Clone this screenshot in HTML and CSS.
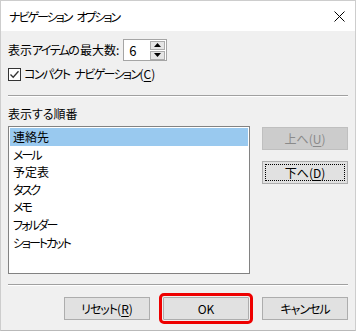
FILE: index.html
```html
<!DOCTYPE html>
<html lang="ja">
<head>
<meta charset="utf-8">
<link rel="stylesheet" href="styles.css">
</head>
<body>
<div class="window">
  <div class="titlebar">
    <span class="title">ナビゲーション<span class="sp"> </span>オプション</span>
    <svg class="close" width="11" height="11" viewBox="0 0 11 11"><path d="M0.5 0.5 L10.5 10.5 M10.5 0.5 L0.5 10.5" stroke="#000" stroke-width="1" fill="none"/></svg>
  </div>
  <div class="body">
    <div class="row-max">
      <span class="label label-max">表示<span class="k">アイテム</span>の最大数:</span>
      <div class="spin">
        <span class="spin-value">6</span>
        <div class="spin-btns">
          <div class="spin-btn"><svg width="7" height="4" viewBox="0 0 7 4"><path d="M3.5 0 L7 4 L0 4 Z" fill="#000"/></svg></div>
          <div class="spin-btn"><svg width="7" height="4" viewBox="0 0 7 4"><path d="M0 0 L7 0 L3.5 4 Z" fill="#000"/></svg></div>
        </div>
      </div>
    </div>
    <div class="row-check">
      <span class="checkbox"><svg width="11" height="11" viewBox="0 0 11 11"><path d="M1.5 5.5 L4.2 8.3 L9.5 2.2" stroke="#333" stroke-width="1.3" fill="none"/></svg></span>
      <span class="label"><span class="k2">コンパクト<span class="sp"> </span>ナビゲーション</span>(<u>C</u>)</span>
    </div>
    <div class="sep sep-top"></div>
    <div class="section-label">表示する順番</div>
    <div class="order">
      <ul class="list">
        <li class="selected">連絡先</li>
        <li class="kana">メール</li>
        <li>予定表</li>
        <li class="kana">タスク</li>
        <li class="kana">メモ</li>
        <li class="kana">フォルダー</li>
        <li class="kana">ショートカット</li>
      </ul>
      <div class="side-btns">
        <div class="btn disabled">上へ(<u>U</u>)</div>
        <div class="btn focused"><span class="focus">下へ(<u>D</u>)</span></div>
      </div>
    </div>
    <div class="sep sep-bottom"></div>
    <div class="footer">
      <div class="btn"><span class="k3">リセット</span>(<u>R</u>)</div>
      <div class="btn highlight">OK</div>
      <div class="btn"><span class="k3">キャンセル</span></div>
    </div>
  </div>
</div>
</body>
</html>
```
FILE: styles.css
```css
html, body {
  margin: 0;
  padding: 0;
  background: #f0f0f0;
}
body {
  font-family: "Noto Sans CJK JP", "Noto Sans", sans-serif;
  font-size: 12px;
  color: #000;
  font-feature-settings: "palt";
}
.window {
  width: 356px;
  height: 331px;
  box-sizing: border-box;
  border: 1px solid #cdcdcd;
  border-bottom-color: #b9b9b9;
  background: #f0f0f0;
  display: flex;
  flex-direction: column;
}
.titlebar {
  height: 30px;
  background: #fff;
  display: flex;
  align-items: center;
  justify-content: space-between;
  padding: 0 10px 0 8px;
}
.title {
  line-height: 16px;
  padding-top: 1px;
  letter-spacing: -2px;
}
.sp {
  display: inline-block;
  width: 5px;
  letter-spacing: 0;
}
.close {
  display: block;
}
.body {
  padding: 8px 7px 0 7px;
  display: flex;
  flex-direction: column;
}
.row-max {
  display: flex;
  align-items: center;
  height: 22px;
}
.label {
  line-height: 16px;
}
.k { letter-spacing: -1.6px; }
.k2 { letter-spacing: -1.6px; }
.k3 { letter-spacing: -1px; }
.spin {
  margin-left: 4px;
  width: 44px;
  height: 22px;
  box-sizing: border-box;
  border: 1px solid #a5a5a5;
  background: #fff;
  display: flex;
  align-items: center;
  justify-content: space-between;
}
.spin-value {
  padding-left: 5px;
  font-size: 13px;
}
.spin-btns {
  display: flex;
  flex-direction: column;
  gap: 1px;
  margin-right: 1px;
}
.spin-btn {
  width: 15px;
  height: 9px;
  box-sizing: border-box;
  border: 1px solid #acacac;
  background: #e5e5e5;
  display: flex;
  align-items: center;
  justify-content: center;
}
.spin-btn svg { display: block; }
.row-check {
  margin-top: 6px;
  display: flex;
  align-items: center;
  height: 14px;
}
.checkbox {
  width: 13px;
  height: 13px;
  box-sizing: border-box;
  border: 1px solid #333;
  background: #fff;
  display: flex;
  align-items: center;
  justify-content: center;
  margin-right: 3px;
}
.checkbox svg { display: block; }
.sep {
  height: 0;
  border-top: 1px solid #a0a0a0;
  border-bottom: 1px solid #fff;
}
.sep-top { margin-top: 14px; }
.section-label {
  margin-top: 9px;
  line-height: 16px;
}
.order {
  margin-top: 4px;
  display: grid;
  grid-template-columns: 242px 86px;
  column-gap: 12px;
}
.list {
  list-style: none;
  margin: 0;
  padding: 1px;
  height: 148px;
  box-sizing: border-box;
  border: 1px solid #828282;
  background: #fff;
}
.list li {
  height: 17.6px;
  line-height: 17.6px;
  padding-left: 3px;
}
.list li.kana {
  letter-spacing: -2px;
}
.list li.selected {
  background: #99c9ef;
}
.side-btns {
  display: flex;
  flex-direction: column;
  gap: 11px;
  padding-top: 1px;
}
.btn {
  height: 23px;
  width: 86px;
  box-sizing: border-box;
  border: 1px solid #adadad;
  background: #e1e1e1;
  display: flex;
  align-items: center;
  justify-content: center;
  line-height: 16px;
}
.btn.disabled {
  background: #cccccc;
  border-color: #bfbfbf;
  color: #8a8a8a;
}
.btn.focused {
  padding: 2px;
}
.focus {
  flex: 1;
  align-self: stretch;
  border: 1px dotted #000;
  display: flex;
  align-items: center;
  justify-content: center;
}
.sep-bottom { margin-top: 10px; }
.footer {
  margin-top: 11px;
  display: flex;
  justify-content: flex-end;
  gap: 13px;
}
.btn.highlight {
  outline: 3px solid #ee0000;
  outline-offset: 1px;
  border-radius: 1px;
}
u {
  text-decoration-thickness: 1px;
  text-underline-offset: 2px;
}
```
